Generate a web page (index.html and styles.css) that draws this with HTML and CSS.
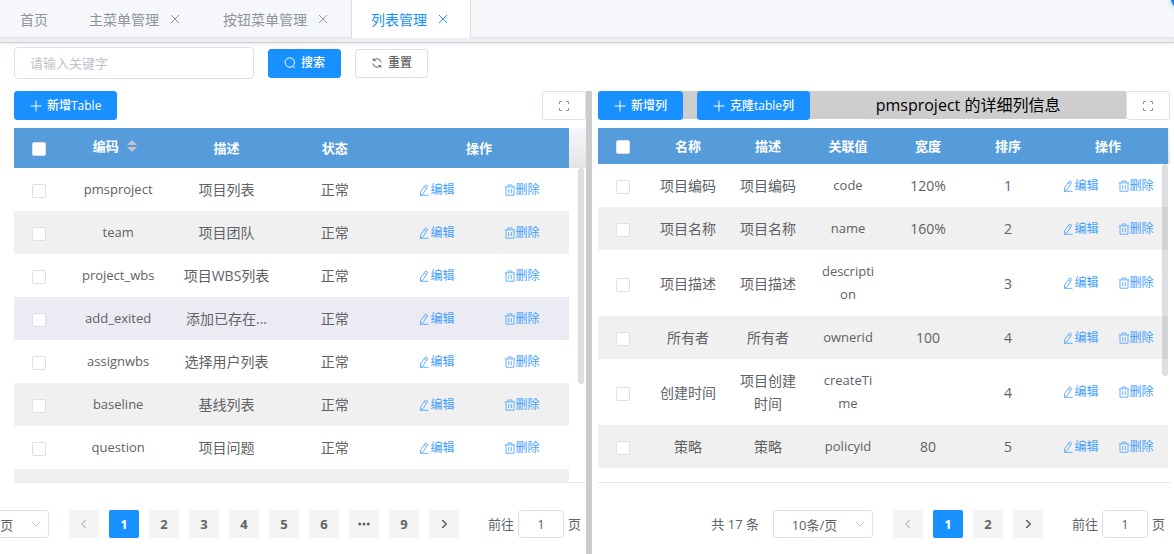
FILE: index.html
```html
<!DOCTYPE html>
<html lang="zh-CN">
<head>
<meta charset="utf-8">
<title>列表管理</title>
<link rel="stylesheet" href="styles.css">
</head>
<body>
<svg class="sprite" aria-hidden="true">
  <symbol id="i-close" viewBox="0 0 14 14"><path d="M3 3l8 8M11 3l-8 8"/></symbol>
  <symbol id="i-search" viewBox="0 0 12 12"><circle cx="5.800" cy="5.500" r="4.700"/><path d="M8.800 9.200l2 2"/></symbol>
  <symbol id="i-refresh" viewBox="0 0 12 12"><path d="M2.300 1.200v2.300h2.400M2.500 3.500A4.300 4.300 0 0 1 10.200 5.400M9.700 10.800V8.500H7.300M9.500 8.500A4.300 4.300 0 0 1 1.800 6.600"/></symbol>
  <symbol id="i-plus" viewBox="0 0 12 12"><path d="M6 .5v11M.5 6h11"/></symbol>
  <symbol id="i-full" viewBox="0 0 12 12"><path d="M1.500 4V1.500H4M8 1.500h2.500V4M10.500 8v2.500H8M4 10.500H1.500V8"/></symbol>
  <symbol id="i-edit" viewBox="0 0 12 12"><path d="M7.500 .9l2.300 1.400-4.600 7.200-2.900 1.600.3-3.300zM6.300 2.900l2.200 1.400M2 11.300h8.500"/></symbol>
  <symbol id="i-trash" viewBox="0 0 12 12"><path d="M.8 2.900h10.400M4 2.700V1h4v1.700M2 3v8.200h8V3M4.700 5v4.200M7.300 5v4.200"/></symbol>
  <symbol id="i-left" viewBox="0 0 12 12"><path d="M7.800 2L3.800 6l4 4"/></symbol>
  <symbol id="i-right" viewBox="0 0 12 12"><path d="M4.200 2l4 4-4 4"/></symbol>
  <symbol id="i-down" viewBox="0 0 12 12"><path d="M2 4l4 4 4-4"/></symbol>
  <symbol id="i-more" viewBox="0 0 12 12"><g fill="currentColor" stroke="none"><circle cx="1.700" cy="6" r="1.500"/><circle cx="6" cy="6" r="1.500"/><circle cx="10.300" cy="6" r="1.500"/></g></symbol>
</svg>

<header class="tabs-wrap">
  <nav class="tabs">
    <div class="tab"><a href="#home">首页</a></div>
    <div class="tab"><a href="#menu">主菜单管理</a><button class="tab-close" aria-label="关闭"><svg><use href="#i-close"/></svg></button></div>
    <div class="tab"><a href="#buttons">按钮菜单管理</a><button class="tab-close" aria-label="关闭"><svg><use href="#i-close"/></svg></button></div>
    <div class="tab active"><a href="#list">列表管理</a><button class="tab-close" aria-label="关闭"><svg><use href="#i-close"/></svg></button></div>
  </nav>
  <span class="float-ball"></span>
</header>

<form class="search-bar" onsubmit="return false">
  <input class="keyword" type="text" placeholder="请输入关键字" aria-label="关键字">
  <button class="btn primary" type="submit"><svg><use href="#i-search"/></svg>搜索</button>
  <button class="btn" type="reset"><svg><use href="#i-refresh"/></svg>重置</button>
</form>

<main class="split">
  <section class="pane pane-left">
    <div class="toolbar">
      <button class="btn primary"><svg><use href="#i-plus"/></svg>新增Table</button>
      <button class="btn full" aria-label="全屏"><svg><use href="#i-full"/></svg></button>
    </div>
    <div class="table-area">
      <table class="grid grid-left">
        <colgroup><col class="c-check"><col><col><col><col class="c-ops"></colgroup>
        <thead><tr><th><input type="checkbox" aria-label="全选"></th><th><span class="sortable">编码<span class="carets"><i class="up"></i><i class="down"></i></span></span></th><th>描述</th><th>状态</th><th>操作</th></tr></thead>
        <tbody id="left-rows"></tbody>
      </table>
      <div class="gutter"><div class="gutter-head"></div></div>
      <div class="thumb"></div>
    </div>
    <div class="pager">
      <span class="size"><select aria-label="每页条数"><option>10条/页</option></select><svg><use href="#i-down"/></svg></span>
      <div class="pages">
        <button disabled aria-label="上一页"><svg><use href="#i-left"/></svg></button>
        <button class="current">1</button><button>2</button><button>3</button><button>4</button><button>5</button><button>6</button>
        <button aria-label="更多"><svg><use href="#i-more"/></svg></button>
        <button>9</button>
        <button aria-label="下一页"><svg><use href="#i-right"/></svg></button>
      </div>
      <label class="jump">前往<input type="text" value="1">页</label>
    </div>
  </section>

  <div class="divider"></div>

  <section class="pane pane-right">
    <div class="toolbar">
      <div class="title-bar">
        <button class="btn primary"><svg><use href="#i-plus"/></svg>新增列</button>
        <button class="btn primary"><svg><use href="#i-plus"/></svg>克隆table列</button>
        <span class="title">pmsproject 的详细列信息</span>
      </div>
      <button class="btn full" aria-label="全屏"><svg><use href="#i-full"/></svg></button>
    </div>
    <div class="table-area">
      <table class="grid grid-right">
        <colgroup><col class="c-check"><col><col><col><col><col><col class="c-ops"></colgroup>
        <thead><tr><th><input type="checkbox" aria-label="全选"></th><th>名称</th><th>描述</th><th>关联值</th><th>宽度</th><th>排序</th><th>操作</th></tr></thead>
        <tbody id="right-rows"></tbody>
      </table>
      <div class="gutter"><div class="gutter-head"></div></div>
      <div class="thumb"></div>
    </div>
    <div class="pager">
      <span class="total">共 17 条</span>
      <span class="size"><select aria-label="每页条数"><option>10条/页</option></select><svg><use href="#i-down"/></svg></span>
      <div class="pages">
        <button disabled aria-label="上一页"><svg><use href="#i-left"/></svg></button>
        <button class="current">1</button><button>2</button>
        <button aria-label="下一页"><svg><use href="#i-right"/></svg></button>
      </div>
      <label class="jump">前往<input type="text" value="1">页</label>
    </div>
  </section>
</main>
<script src="app.js"></script>
</body>
</html>
```
FILE: styles.css
```css
* { box-sizing: border-box; }

body {
  margin: 0;
  height: 100vh;
  display: flex;
  flex-direction: column;
  overflow: hidden;
  background: #fff;
  color: #606266;
  font: 14px/23px "Open Sans", "Noto Sans CJK SC", sans-serif;
}

button, input, select { font: inherit; color: inherit; margin: 0; }
button { cursor: pointer; }
svg { width: 12px; height: 12px; flex: none; fill: none; stroke: currentColor; stroke-width: 1; }
.sprite { display: none; }

/* tabs */
.tabs-wrap {
  position: relative;
  flex: none;
  height: 43px;
  background: linear-gradient(#dcdde3, #eeeef1);
  border-bottom: 1px solid #ccd0dc;
  box-shadow: 0 1px 3px rgba(0, 0, 0, .1);
}
.tabs { display: flex; height: 38px; background: #f5f7fa; border-bottom: 1px solid #dfe4ed; }
.tab {
  display: flex;
  align-items: center;
  height: 38px;
  padding: 0 20px;
  border: solid transparent;
  border-width: 0 1px 0 0;
  color: #909399;
}
.tab a { color: inherit; text-decoration: none; }
.tab-close { display: flex; margin-left: 9px; padding: 0; border: 0; background: none; }
.tab-close svg { width: 14px; height: 14px; }
.tab.active { padding-left: 19px; background: #fff; color: #1890ff; border-color: #dcdfe6; border-left-width: 1px; }
.float-ball {
  position: absolute;
  top: -11px;
  right: -17px;
  width: 20px;
  height: 20px;
  border-radius: 50%;
  background: #1080ff;
  box-shadow: 0 0 6px rgba(24, 144, 255, .3);
}

/* search bar */
.search-bar { display: flex; align-items: center; gap: 14px; flex: none; padding: 4px 14px 12px; }
.keyword {
  width: 240px;
  height: 32px;
  padding: 0 15px;
  border: 1px solid #dcdfe6;
  border-radius: 4px;
  background: #fff;
  font-size: 13px;
}
.keyword::placeholder { color: #c0c4cc; }

.btn {
  display: inline-flex;
  align-items: center;
  justify-content: center;
  gap: 5px;
  flex: none;
  height: 29px;
  padding: 0 15px;
  border: 1px solid #dcdfe6;
  border-radius: 3px;
  background: #fff;
  font-size: 12px;
  font-weight: 500;
  line-height: 12px;
}
.btn.primary { background: #1890ff; border-color: #1890ff; color: #fff; }
.btn.full { width: 44px; padding: 0; color: #909399; }

/* split panes */
.split { display: grid; grid-template-columns: minmax(0, 586fr) 6px minmax(0, 582fr); flex: 1; min-height: 0; }
.pane { display: flex; flex-direction: column; min-width: 0; min-height: 0; overflow: hidden; }
.pane-left { padding-left: 14px; }
.pane-right { padding: 0 4px 0 6px; }
.divider { background: #ccc; }

.toolbar { display: flex; justify-content: space-between; flex: none; margin-bottom: 8px; }
.title-bar { display: flex; gap: 14px; flex: 1; height: 28px; background: #cecece; }
.title { flex: 1; margin-left: -14px; line-height: 28px; font-size: 16px; color: #000; text-align: center; }

/* tables */
.table-area { position: relative; display: flex; align-items: flex-start; flex: 1; min-height: 0; overflow: hidden; border-bottom: 1px solid #e4e8f4; }
.grid { flex: 1; width: 0; table-layout: fixed; border-collapse: collapse; text-align: center; }
.grid th { height: 36px; background: #569cdb; color: #fff; font-size: 13px; padding: 0; }
.grid td { height: 43px; padding: 10px; overflow-wrap: anywhere; }
.grid .code { padding: 10px 11px; font-size: 13px; }
.grid th:first-child, .grid td:first-child { padding: 0; }
.grid-left th { height: 40px; }
.grid-left td { padding: 0; white-space: nowrap; }
.grid tbody tr:nth-child(even) { background: #f0f0f0; }
.grid tbody tr.hover { background: #ebebf3; }
.c-check { width: 50px; }
.grid-left .c-ops { width: 180px; }
.grid-right .c-ops { width: 120px; }

input[type="checkbox"] {
  display: block;
  width: 14px;
  height: 14px;
  margin: 3px auto 0;
  appearance: none;
  border: 1px solid #dcdfe6;
  border-radius: 2px;
  background: #fff;
}
th input[type="checkbox"] { margin-top: 2px; }

.sortable { display: inline-flex; align-items: center; gap: 8px; padding: 0 7px 4px 0; }
.carets { display: flex; flex-direction: column; gap: 2px; }
.carets i { border: 5px solid transparent; }
.carets .up { border-top: 0; border-bottom-color: #c0c4cc; }
.carets .down { border-bottom: 0; border-top-color: #c0c4cc; }

.ops { display: flex; justify-content: center; gap: 19px; margin: 0 -10px; }
.grid-left .ops { gap: 49px; margin: 0; }
.op {
  display: inline-flex;
  align-items: center;
  padding: 0;
  border: 0;
  background: none;
  color: #409eff;
  font-size: 12px;
  line-height: 20px;
}
.op svg { opacity: .8; }

.gutter { flex: none; width: 2px; }
.gutter-head { height: 36px; background: linear-gradient(#f5f7fa, #e2e4e4); }
.pane-left .gutter { width: 17px; }
.pane-left .gutter-head { height: 40px; }
.thumb {
  position: absolute;
  top: 36px;
  right: 2px;
  width: 6px;
  height: 60%;
  border-radius: 3px;
  background: rgba(144, 147, 153, .3);
}
.pane-left .thumb { top: 40px; height: 61%; }

/* pagination */
.pager { display: flex; align-items: center; justify-content: flex-end; flex: none; padding: 27px 5px 16px 0; font-size: 13px; line-height: 28px; }
.total { margin-right: 14px; }
.size { position: relative; flex: none; }
.size select {
  display: block;
  width: 100px;
  height: 28px;
  padding: 0 25px 0 8px;
  appearance: none;
  border: 1px solid #dcdfe6;
  border-radius: 3px;
  background: #fff;
  text-align: center;
  text-align-last: center;
}
.size svg { position: absolute; top: 8px; right: 7px; color: #c0c4cc; }
.pages { display: flex; gap: 10px; flex: none; margin: 0 29px 0 20px; }
.pages button {
  display: flex;
  align-items: center;
  justify-content: center;
  width: 30px;
  height: 28px;
  padding: 0;
  border: 0;
  border-radius: 2px;
  background: #f4f4f5;
  font-weight: 700;
}
.pages button svg { stroke-width: 1.5; }
.pages button:disabled { color: #c0c4cc; }
.pages .current { background: #1890ff; color: #fff; }
.jump { display: flex; flex: none; gap: 4px; }
.jump input { width: 46px; height: 28px; padding: 0; border: 1px solid #dcdfe6; border-radius: 4px; background: #fff; text-align: center; }
```
FILE: app.js
```js
const left = [
  ["pmsproject", "项目列表"],
  ["team", "项目团队"],
  ["project_wbs", "项目WBS列表"],
  ["add_exited", "添加已存在..."],
  ["assignwbs", "选择用户列表"],
  ["baseline", "基线列表"],
  ["question", "项目问题"],
  ["", ""]
];
const right = [
  ["项目编码", "项目编码", "code", "120%", "1"],
  ["项目名称", "项目名称", "name", "160%", "2"],
  ["项目描述", "项目描述", "description", "", "3"],
  ["所有者", "所有者", "ownerid", "100", "4"],
  ["创建时间", "项目创建时间", "createTime", "", "4"],
  ["策略", "策略", "policyid", "80", "5"]
];
const op = (icon, text) => `<button class="op"><svg><use href="#${icon}"/></svg>${text}</button>`;
const ops = `<div class="ops">${op("i-edit", "编辑")}${op("i-trash", "删除")}</div>`;
const cell = text => `<td${/^[a-z]/i.test(text) ? ' class="code"' : ""}>${text}</td>`;
const row = (cells, cls) =>
  `<tr class="${cls}"><td><input type="checkbox" aria-label="选择 ${cells[0]}"></td>` +
  cells.map(cell).join("") + `<td>${ops}</td></tr>`;

document.getElementById("left-rows").innerHTML = left
  .map(([code, text], i) => code ? row([code, text, "正常"], i === 3 ? "hover" : "") : '<tr><td colspan="5"></td></tr>')
  .join("");
document.getElementById("right-rows").innerHTML = right.map(r => row(r, "")).join("");
```
